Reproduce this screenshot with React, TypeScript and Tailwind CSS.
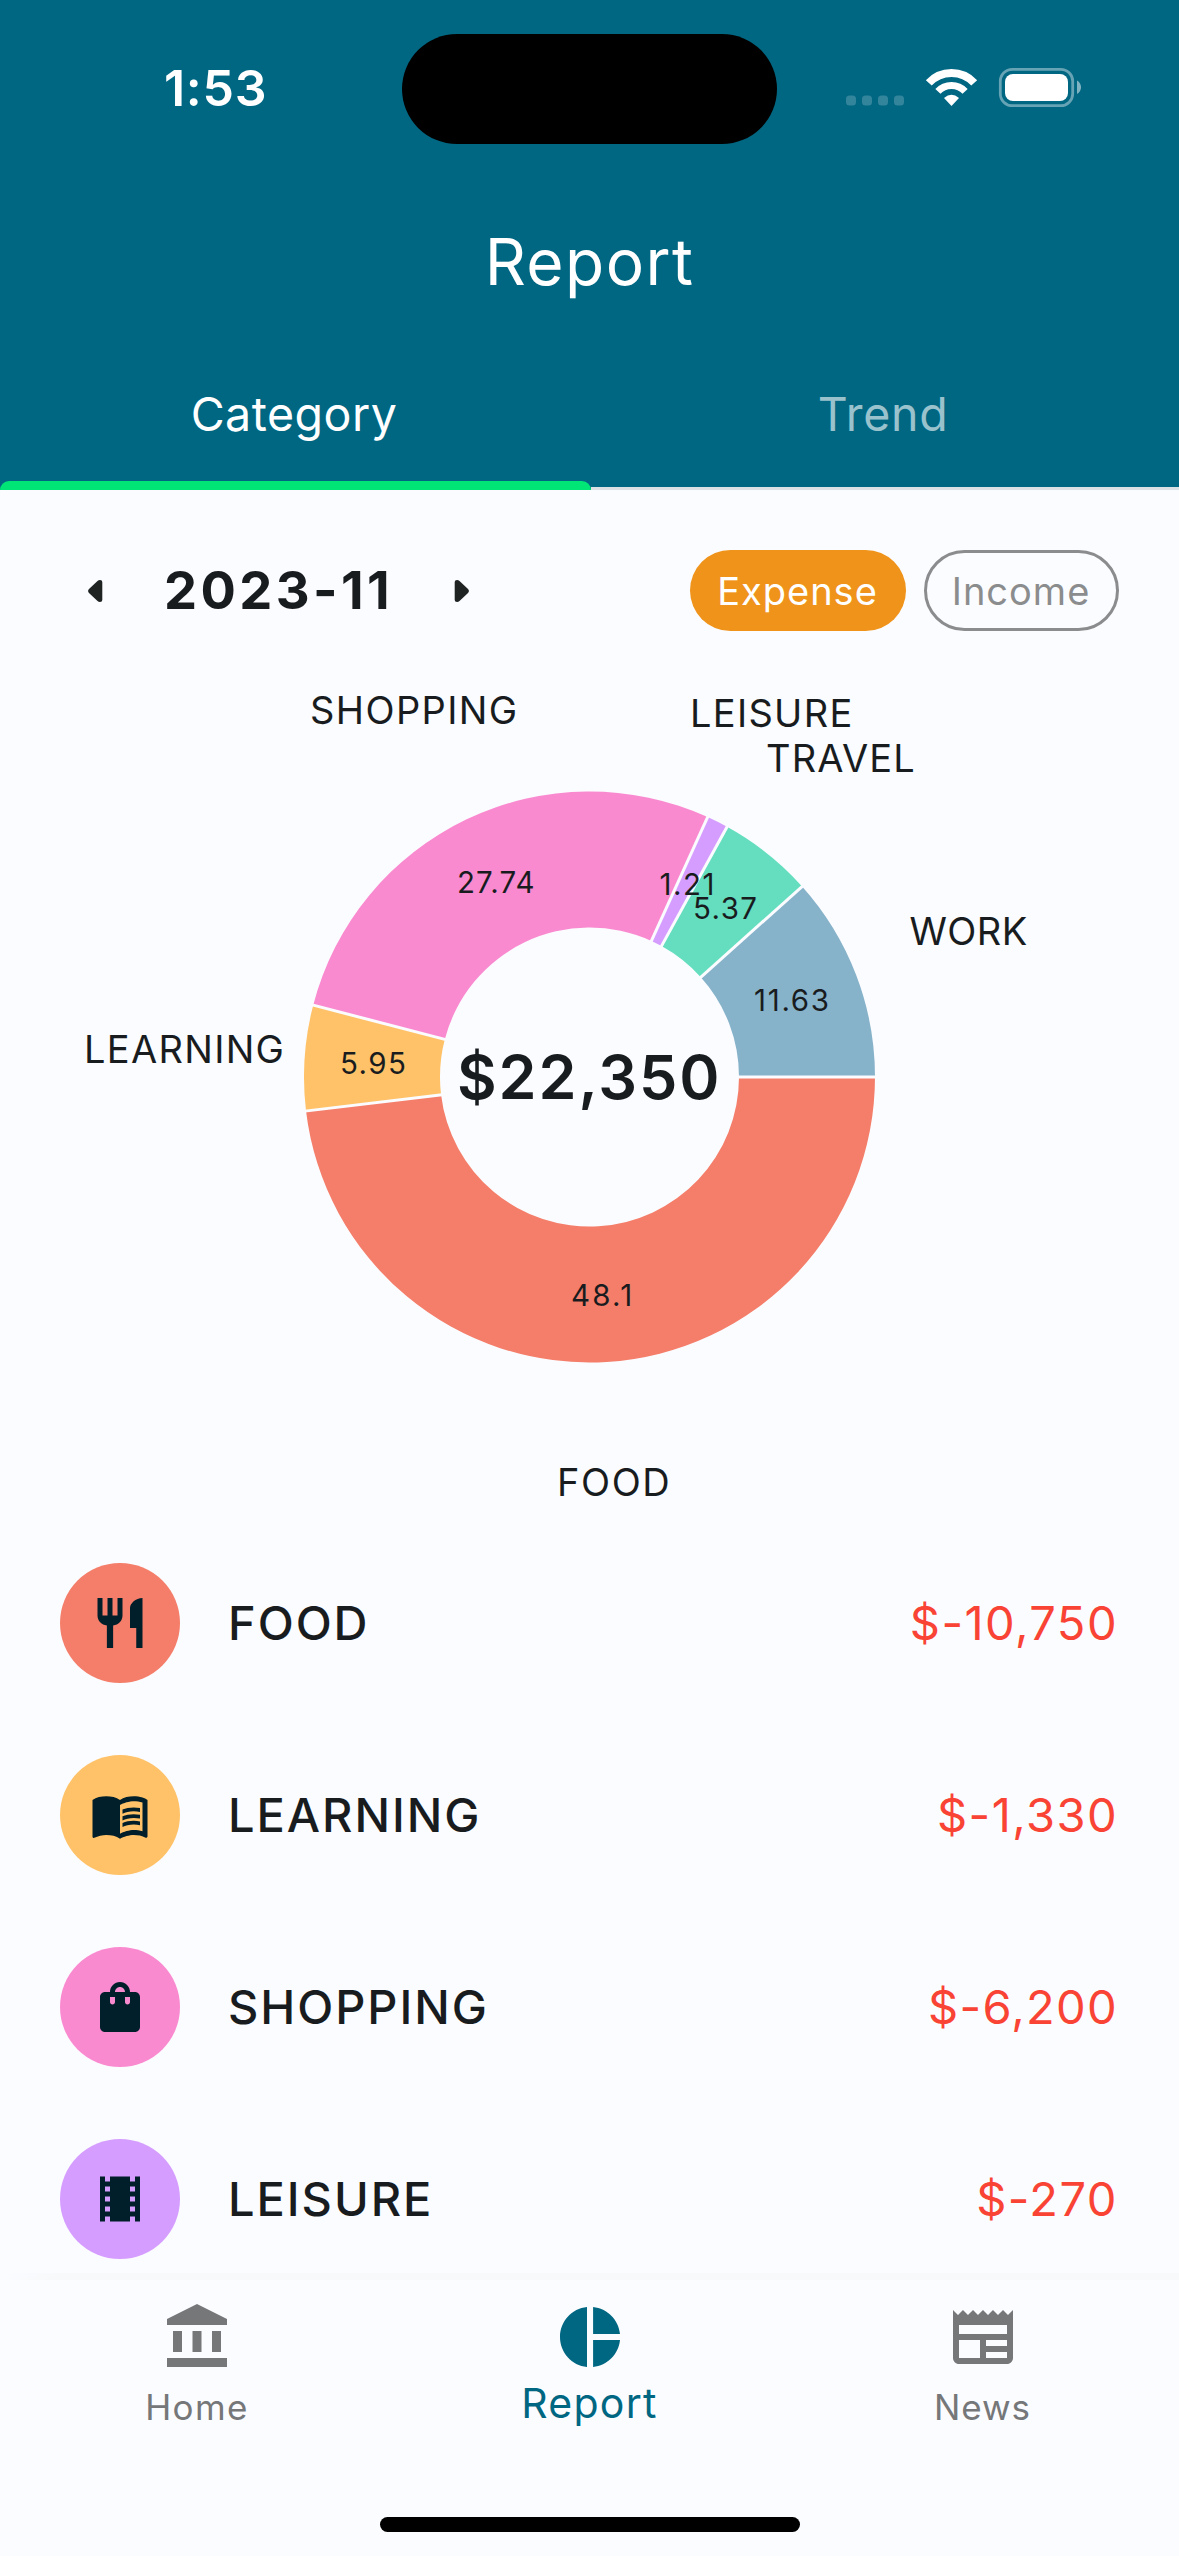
import type { ReactNode } from "react";
import {
  MdMenuBook,
  MdNewspaper,
  MdPieChart,
  MdRestaurant,
  MdShoppingBag,
  MdTheaters,
} from "react-icons/md";

const CX = 589.5;
const CY = 1077;
const OUTER = 285.5;
const INNER = 149.5;

type Slice = { value: number; color: string };

const slices: Slice[] = [
  { value: 48.1, color: "#f47e6a" },
  { value: 5.95, color: "#ffc268" },
  { value: 27.74, color: "#fa8ad0" },
  { value: 1.21, color: "#d59dff" },
  { value: 5.37, color: "#64debf" },
  { value: 11.63, color: "#86b2ca" },
];

function point(radius: number, angle: number) {
  return `${CX + radius * Math.cos(angle)} ${CY + radius * Math.sin(angle)}`;
}

function Donut() {
  let start = 0;
  const arcs = slices.map((s) => {
    const from = start;
    const to = from + (s.value / 100) * Math.PI * 2;
    start = to;
    const large = to - from > Math.PI ? 1 : 0;
    return {
      color: s.color,
      from,
      d: `M${point(OUTER, from)}A${OUTER} ${OUTER} 0 ${large} 1 ${point(OUTER, to)}L${point(INNER, to)}A${INNER} ${INNER} 0 ${large} 0 ${point(INNER, from)}Z`,
    };
  });
  return (
    <>
      {arcs.map((a) => (
        <path key={a.color} d={a.d} fill={a.color} />
      ))}
      {arcs.map((a) => (
        <path
          key={a.color}
          d={`M${point(INNER - 1, a.from)}L${point(OUTER + 1, a.from)}`}
          stroke="#fbfcff"
          strokeWidth="3"
        />
      ))}
    </>
  );
}

// text, x, baseline, letter spacing
const names: [string, number, number, number][] = [
  ["SHOPPING", 310, 724, 1.4],
  ["LEISURE", 690, 727, 1.3],
  ["TRAVEL", 766, 772, 1.1],
  ["WORK", 909.5, 945, 0.4],
  ["LEARNING", 84, 1063, 1.3],
  ["FOOD", 557, 1496, 1.6],
];

const values: [string, number, number, number][] = [
  ["27.74", 457, 893, 1.1],
  ["1.21", 659.5, 895, 1.5],
  ["5.37", 693, 919, 1.4],
  ["11.63", 754, 1011, 1.7],
  ["5.95", 340, 1074, 1.4],
  ["48.1", 571, 1306, 2.2],
];

function Chart() {
  return (
    <svg viewBox="0 631 1179 896" className="block h-[896px] w-full shrink-0" fill="#191c1e">
      <Donut />
      {names.map(([t, x, y, ls]) => (
        <text key={t} x={x} y={y} letterSpacing={ls} className="text-[38px]">
          {t}
        </text>
      ))}
      {values.map(([t, x, y, ls]) => (
        <text key={t} x={x} y={y} letterSpacing={ls} className="text-[29.5px]">
          {t}
        </text>
      ))}
      <text x="457" y="1099" letterSpacing="1.9" className="text-[61px] font-semibold">
        $22,350
      </text>
    </svg>
  );
}

function StatusIcons() {
  return (
    <svg viewBox="840 60 250 56" className="h-14 w-[250px]" fill="white">
      {[846, 862, 878, 894].map((x) => (
        <rect key={x} x={x} y="95.5" width="10" height="10" rx="3.5" opacity="0.2" />
      ))}
      <g fill="none" stroke="white">
        <path d="M928.8 82.9A31 31 0 0 1 974.2 82.9" strokeWidth="8" />
        <path d="M937.9 91.4A18.6 18.6 0 0 1 965.1 91.4" strokeWidth="7" />
      </g>
      <path d="M944 98Q951.5 91.5 959 98L951.5 106Z" />
      <rect x="1000.3" y="69.3" width="72.4" height="36.4" rx="12" fill="none" stroke="white" strokeWidth="2.8" opacity="0.4" />
      <rect x="1005" y="74" width="63" height="27" rx="8" />
      <path d="M1077 80.5Q1081 83 1081 87.3T1077 94Z" opacity="0.5" />
    </svg>
  );
}

function Header() {
  return (
    <header className="h-[490px] shrink-0 bg-[#006783] text-white">
      <div className="flex h-[177px] items-center">
        <div className="w-[402px] pb-px pl-[164px] text-[50px] font-semibold tracking-[0.7px]">1:53</div>
        <div className="mt-px h-[110px] w-[375px] rounded-full bg-black" />
        <div className="pb-px pl-[63px]">
          <StatusIcons />
        </div>
      </div>
      <h1 className="flex h-[169px] items-center justify-center text-[64px] tracking-[1.4px]">Report</h1>
      <nav className="flex h-36 text-[46.5px]">
        <div className="flex w-[591px] flex-col">
          <div className="flex h-[135px] items-center justify-center pt-px pr-[3px] tracking-[0.5px]">Category</div>
          <div className="h-[9px] rounded-t-[9px] bg-[#00e676]" />
        </div>
        <div className="flex flex-1 flex-col">
          <div className="flex h-[135px] items-center justify-center pt-px pr-[4px] tracking-[0.7px] text-[#99c2cd]">Trend</div>
          <div className="mt-[6px] h-[3px] bg-[#dce1e6]" />
        </div>
      </nav>
    </header>
  );
}

function Toolbar() {
  return (
    <div className="mt-[60px] flex h-[81px] shrink-0 items-center pr-[60px] pl-[88px]">
      <svg viewBox="0 0 15 22" className="h-[22px] w-[15px]" fill="#1f2322">
        <path d="M14.3 2V20Q14.3 22 12 22Q10.5 22 9.5 21L1 13Q-.8 11 1 9L9.5 1Q10.5 0 12 0Q14.3 0 14.3 2Z" />
      </svg>
      <div className="ml-[61px] w-[290px] text-[52.5px] font-[650] tracking-[3.4px] text-[#191c1e]">2023-11</div>
      <svg viewBox="0 0 15 22" className="h-[22px] w-[15px]" fill="#1f2322">
        <path d="M.7 2V20Q.7 22 3 22Q4.5 22 5.5 21L14 13Q15.8 11 14 9L5.5 1Q4.5 0 3 0Q.7 0 .7 2Z" />
      </svg>
      <div className="ml-auto flex gap-[18px] text-[38px] tracking-[1px]">
        <div className="flex h-[81px] w-[216px] items-center justify-center rounded-full bg-[#ef931b] pr-px text-white">Expense</div>
        <div className="flex h-[81px] w-[195px] items-center justify-center rounded-full border-3 border-[#8b8c8d] pr-px text-[#8b8c8d]">
          Income
        </div>
      </div>
    </div>
  );
}

type RowProps = { name: string; amount: string; circle: string; icon: ReactNode; spacing: string };

const rows: RowProps[] = [
  { name: "FOOD", amount: "$-10,750", circle: "bg-[#f47e6a]", icon: <MdRestaurant />, spacing: "tracking-[1.45px]" },
  { name: "LEARNING", amount: "$-1,330", circle: "bg-[#ffc268]", icon: <MdMenuBook />, spacing: "tracking-[1.45px]" },
  { name: "SHOPPING", amount: "$-6,200", circle: "bg-[#fa8ad0]", icon: <MdShoppingBag />, spacing: "tracking-[1.3px]" },
  { name: "LEISURE", amount: "$-270", circle: "bg-[#d59dff]", icon: <MdTheaters />, spacing: "tracking-[1.5px]" },
];

function Row({ name, amount, circle, icon, spacing }: RowProps) {
  return (
    <li className="flex h-48 shrink-0 items-center pr-[61px] pl-[60px] text-[47px]">
      <div className={`flex size-[120px] items-center justify-center rounded-full text-[60px] text-[#001f2a] ${circle}`}>
        {icon}
      </div>
      <span className="ml-12 pb-[2px] font-[550] tracking-[1.95px] text-[#191c1e]">{name}</span>
      <span className={`ml-auto pb-[2px] text-[#f94435] ${spacing}`}>{amount}</span>
    </li>
  );
}

function BankIcon() {
  return (
    <svg viewBox="0 0 24 24" className="size-[72px]" fill="currentColor">
      <path d="M12 1 2 6v2h20V6ZM4 10h3v7H4Zm6.5 0h3v7h-3ZM17 10h3v7h-3ZM2 19h20v3H2Z" />
    </svg>
  );
}

function BottomBar() {
  return (
    <footer className="relative flex h-[276px] shrink-0 flex-col items-center bg-[#fbfcff]">
      <div className="absolute inset-x-0 -top-[7px] h-[7px] bg-linear-to-r from-[#fbfcff] via-[#f8f9fb] via-5% to-[#f8f9fb]" />
      <nav className="grid h-[237px] w-full grid-cols-3 text-[35px] text-[#757779]">
        <div className="flex flex-col items-center pt-[21px]">
          <BankIcon />
          <span className="mt-[14px] pl-px leading-10 tracking-[1.4px]">Home</span>
        </div>
        <div className="flex flex-col items-center pt-[21px] text-[#006783]">
          <MdPieChart className="size-[72px]" />
          <span className="mt-[10px] text-[41px] leading-10 tracking-[1.3px]">Report</span>
        </div>
        <div className="flex flex-col items-center pt-[21px]">
          <MdNewspaper className="size-[72px]" />
          <span className="mt-[14px] leading-10 tracking-[0.9px]">News</span>
        </div>
      </nav>
      <div className="h-[15px] w-[420px] rounded-full bg-black" />
    </footer>
  );
}

export default function App() {
  return (
    <div className="flex h-[2556px] w-[1179px] flex-col overflow-hidden bg-[#fbfcff] font-['Inter',sans-serif] leading-none">
      <Header />
      <main className="flex flex-1 flex-col overflow-hidden">
        <Toolbar />
        <Chart />
        <ul className="flex flex-col">
          {rows.map((r) => (
            <Row key={r.name} {...r} />
          ))}
        </ul>
      </main>
      <BottomBar />
    </div>
  );
}
